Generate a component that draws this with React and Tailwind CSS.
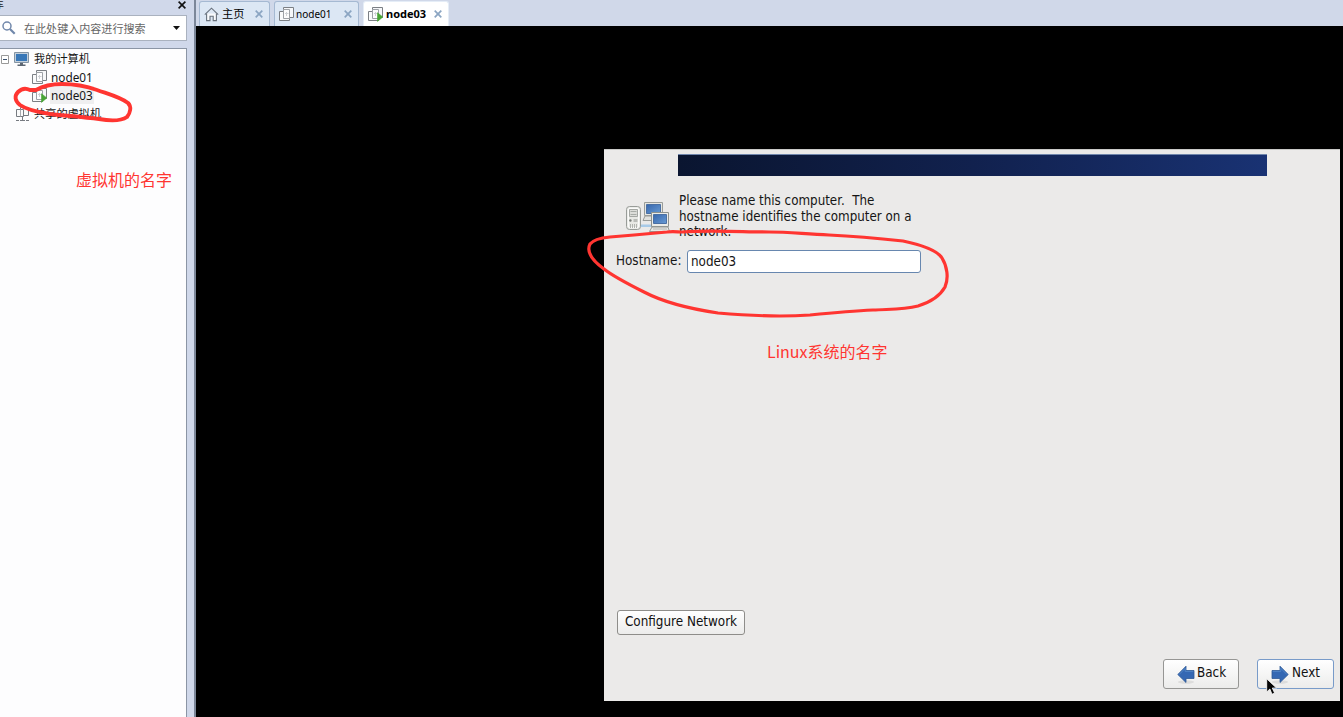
import React from "react";

function HomeIcon() {
  return (
    <svg className="block shrink-0" width="15" height="15" viewBox="0 0 15 15" fill="#f8fafc" stroke="#68717c" strokeWidth="1.1">
      <path d="M2.6 6.6V13.6H6V9.3H9.2V13.6H12.4V6.6" />
      <path d="M.8 7.6L7.5 1.2L14.2 7.6" fill="none" />
    </svg>
  );
}

function VmIcon({ running = false }) {
  return (
    <svg className="block shrink-0" width="16" height="16" viewBox="0 0 16 16" fill="none" stroke="#7b7f84">
      <path d="M4.5 1.5H14.5V11.5H4.5Z" fill="#f6f7f9" />
      <path d="M.5 5.5H10.5V14.5H.5Z" fill="#fafbfc" />
      <path d="M4.5 3.5H10.5V12.5H4.5Z" fill="#fdfdfe" stroke="#9da1a6" />
      <path d="M6 7.5H9.5M7.5 6V10" stroke="#ced1d5" />
      {running && <path d="M9.5 6.7L14.8 11L9.5 15.4Z" fill="#48a536" stroke="#48a536" strokeWidth=".6" />}
    </svg>
  );
}

function SharedIcon() {
  return (
    <svg className="block shrink-0" width="14" height="15" viewBox="0 0 14 15" fill="#fafafa" stroke="#777b81">
      <path d="M4.5 .5H12.5V8.5H4.5Z" />
      <path d="M.5 2.5H7.5V9.5H.5Z" />
      <path d="M4.5 2.5V9.5" stroke="#a6a9ae" />
      <path d="M6.5 9.5V13.5" fill="none" />
      <path d="M0 13.5H3M4 13.5H9M10 13.5H13" />
    </svg>
  );
}

function ComputerIcon() {
  return (
    <svg className="block shrink-0" width="15" height="15" viewBox="0 0 15 15">
      <path d="M.5 .5H14.5V10.5H.5Z" fill="#c4d0dc" stroke="#8494a3" />
      <path d="M2 2H13V9H2Z" fill="#3978b8" />
      <path d="M6 11H9V12.5H11.5V14H3.5V12.5H6Z" fill="#5c6672" />
    </svg>
  );
}

function CloseIcon() {
  return (
    <svg className="block shrink-0" width="8" height="8" viewBox="0 0 8 8" stroke="#8ba5c2" strokeWidth="1.7">
      <path d="M.7 .7L7.3 7.3M7.3 .7L.7 7.3" />
    </svg>
  );
}

function NetworkIcon() {
  return (
    <svg className="block shrink-0" width="44" height="31" viewBox="0 0 44 31">
      <defs>
        <linearGradient id="screen" x2="1" y2="1">
          <stop stopColor="#3767ad" />
          <stop offset="1" stopColor="#679ad3" />
        </linearGradient>
      </defs>
      <path d="M14 22.5H26V25H14Z" fill="#a9cbe8" />
      <path d="M18.5 .5H36.5V13.5H18.5Z" fill="#e5e6e2" stroke="#999c99" />
      <path d="M20.5 2.5H34.5V11.5H20.5Z" fill="url(#screen)" stroke="#4a70a4" />
      <path d="M19 14L17 18.5H27V14Z" fill="#e0e1de" stroke="#999b98" />
      <rect x=".5" y="4.5" width="14" height="23" rx="3" fill="#e8e9e5" stroke="#989c98" />
      <rect x="2.3" y="6.3" width="10.4" height="19.4" rx="1.6" fill="none" stroke="#fff" />
      <path d="M3.5 7.5H11.5V14.5H3.5Z" fill="#dcddd9" stroke="#a5a8a4" />
      <path d="M4.5 9.5H10.5M4.5 12.5H10.5" stroke="#a8aca7" />
      <circle cx="4.4" cy="18.5" r="1.2" fill="#777c78" />
      <path d="M7.5 17H11.5V20H7.5Z" fill="#babcb8" />
      <path d="M4.5 22V26M6.5 22V26M8.5 22V26M10.5 22V26" stroke="#b1b4af" />
      <path d="M25.5 10.5H42.5V24.5H25.5Z" fill="#ebece8" stroke="#8e928e" />
      <path d="M27.5 12.5H40.5V21.5H27.5Z" fill="url(#screen)" stroke="#4a70a4" />
      <path d="M26 25H42L43.5 29.5H23.5Z" fill="#e7e8e4" stroke="#979a96" />
      <path d="M27 27H41" stroke="#b4b6b2" />
    </svg>
  );
}

function ArrowIcon({ back = false }) {
  return (
    <svg className="block shrink-0" width="18" height="20" viewBox="0 0 18 20">
      <ellipse cx="9" cy="18" rx="8" ry="1.8" fill="#000" opacity=".08" />
      <g transform={back ? "translate(18 0) scale(-1 1)" : undefined}>
        <path d="M1 6.5H9V2.2L17.2 10.5L9 18.5V14.5H1Z" fill="#3568b3" stroke="#2f5995" strokeWidth=".8" />
        <path d="M1.7 7.4H9.8V4.3L15.8 10.5" fill="none" stroke="#568acb" strokeWidth=".8" />
      </g>
    </svg>
  );
}

function Tab({ label, width, icon, active = false, labelClass }) {
  return (
    <div className={`${width} ${active ? "border-[#e5edf7] bg-white" : "border-[#a5b9d2] bg-[#dce7f4]"} flex h-[25px] items-center rounded-t-[3px] border border-b-0 pr-[6px] pl-[4px]`}>
      {icon}
      <span className={`${labelClass} flex-1 whitespace-nowrap text-black`}>{label}</span>
      <CloseIcon />
    </div>
  );
}

function Sidebar() {
  return (
    <aside className="flex h-full w-[196px] shrink-0 flex-col border-r-2 border-[#7c8799] bg-[#d0d8ea] font-['Noto_Sans_CJK_SC',sans-serif]">
      <div className="flex h-[15px] items-start justify-between overflow-hidden pr-[8px]">
        <span className="-mt-[5px] -ml-[8px] text-[12px] leading-[16px] text-[#222]">库</span>
        <svg className="mt-[1px]" width="8" height="8" viewBox="0 0 8 8" stroke="#111" strokeWidth="1.6">
          <path d="M.6 .6L7.4 7.4M7.4 .6L.6 7.4" />
        </svg>
      </div>
      <div className="flex h-[26px] w-[187px] items-center border border-l-0 border-[#aab2bf] bg-white pr-[6px] pl-[2px]">
        <svg className="shrink-0" width="14" height="14" viewBox="0 0 14 14" fill="none" stroke="#7188ab">
          <circle cx="5" cy="5" r="4" strokeWidth="1.5" />
          <path d="M8 8L12.7 12.7" strokeWidth="2.2" />
        </svg>
        <span className="ml-[8px] flex-1 text-[11.05px] whitespace-nowrap text-[#666]">在此处键入内容进行搜索</span>
        <svg width="7" height="4" viewBox="0 0 7 4"><path d="M0 0H7L3.5 4Z" fill="#111" /></svg>
      </div>
      <div className="mt-[7px] w-[187px] flex-1 border-t border-r border-[#8b95a5] bg-[#fdfdfe] text-[11.2px] text-[#161616]">
        <div className="flex h-[19px] items-center pt-[1px] pl-[1px]">
          <svg className="mr-[5px]" width="8" height="9" viewBox="0 0 8 9"><path d="M.5 .5H7.5V8.5H.5Z" fill="#fff" stroke="#999" /><path d="M2 4.5H6" stroke="#39506e" /></svg>
          <ComputerIcon />
          <span className="ml-[5px] pb-[3px] leading-[18px]">我的计算机</span>
        </div>
        <div className="flex h-[18px] items-center pl-[32px]">
          <VmIcon />
          <span className="ml-[3px] font-['Noto_Sans',sans-serif] text-[11.8px] leading-[18px]">node01</span>
        </div>
        <div className="flex h-[19px] items-start pl-[32px]">
          <div className="pt-[1px]"><VmIcon running /></div>
          <span className="ml-[2px] bg-[#efeff0] px-[1px] font-['Noto_Sans',sans-serif] text-[11.8px] leading-[18px]">node03</span>
        </div>
        <div className="flex h-[18px] items-center pl-[16px]">
          <SharedIcon />
          <span className="ml-[4px] pb-[2px] leading-[18px]">共享的虚拟机</span>
        </div>
      </div>
    </aside>
  );
}

function DialogButton({ children, className }) {
  return (
    <button className={`${className} flex items-center rounded-[3px] border bg-linear-to-b from-white to-[#ececeb] whitespace-nowrap text-[#111] font-stretch-condensed`}>
      {children}
    </button>
  );
}

function Installer() {
  return (
    <section className="mt-[123px] ml-[408px] flex h-[552px] w-[736px] flex-col border-t border-[#c9c9c7] bg-[#ebeae9] font-['DejaVu_Sans_Condensed','DejaVu_Sans',sans-serif] text-[13.35px] text-[#151515] font-stretch-condensed">
      <div className="mt-[4px] ml-[74px] h-[22px] w-[589px] border-t border-[#6f85ab] bg-linear-to-r from-[#0a1530] via-[#11214e] to-[#193273]" />
      <div className="mt-[17px] ml-[22px] flex">
        <div className="mt-[9px]"><NetworkIcon /></div>
        <p className="ml-[9px] text-[13.25px] leading-[15.5px] whitespace-pre">{"Please name this computer.  The\nhostname identifies the computer on a\nnetwork."}</p>
      </div>
      <label className="mt-[10px] ml-[12px] flex h-[23px] items-center">
        <span className="w-[71px] pt-[1px]">Hostname:</span>
        <input readOnly value="node03" className="h-[23px] w-[234px] rounded-[3px] border border-[#6787af] bg-white px-[3px] pt-[1px] outline-none" />
      </label>
      <div className="flex-1" />
      <DialogButton className="ml-[13px] h-[25px] w-[128px] justify-center border-[#8e8d8a]">Configure Network</DialogButton>
      <div className="mt-[24px] mr-[6px] mb-[12px] flex h-[30px] justify-end gap-[18px]">
        <DialogButton className="w-[76px] gap-[2px] border-[#969694] pl-[13px]"><ArrowIcon back /><span className="pb-[1px]">Back</span></DialogButton>
        <DialogButton className="w-[77px] gap-[3px] border-[#789bc9] pl-[13px]"><ArrowIcon /><span className="pb-[1px]">Next</span></DialogButton>
      </div>
    </section>
  );
}

function Annotations() {
  return (
    <div className="pointer-events-none absolute inset-0 font-['Noto_Sans_CJK_SC',sans-serif] text-[16px] leading-[24px] text-[#ff3531]">
      <svg className="absolute inset-0" width="1343" height="717" viewBox="0 0 1343 717" fill="none" stroke="#ff3531" strokeLinecap="round" strokeLinejoin="round">
        <path strokeWidth="3.9" d="M30 90C26 88 22 88 18 92C14 96 15 101 20 105C27 110 37 112 50 114C69 116 83 117 99 119C110 121 121 121 127 117C130 113 132 107 128 103C120 97 108 94 97 90C86 86 75 84 62 84C51 84 43 86 36 90H30" />
        <path strokeWidth="3.2" d="M682 232C713 230 743 232 769 232C789 232 804 234 829 235C852 236 876 238 903 241C922 245 937 250 942 258C947 266 949 278 945 287C940 296 931 302 918 306C903 310 890 309 873 310C850 311 830 313 810 315C781 317 752 316 718 313C691 309 665 303 644 292C630 285 614 277 604 269C593 261 586 252 590 244C593 240 600 238 610 237L634 235L667 232C673 231 678 232 682 232" />
      </svg>
      <span className="absolute top-[167px] left-[76px] whitespace-nowrap">虚拟机的名字</span>
      <span className="absolute top-[339px] left-[767px] whitespace-nowrap">Linux系统的名字</span>
      <svg className="absolute top-[678px] left-[1266px]" width="12" height="18" viewBox="0 0 12 18">
        <path d="M.7 .8V14L3.9 11L6 16.3L8.6 15.1L6.3 10H10.5Z" fill="#050505" stroke="#fff" strokeWidth=".8" />
      </svg>
    </div>
  );
}

export default function App() {
  return (
    <div className="relative flex h-[717px] w-[1343px] overflow-hidden bg-black">
      <Sidebar />
      <main className="flex min-w-0 flex-1 flex-col">
        <header className="flex h-[26px] shrink-0 items-end gap-[4px] bg-[#d0d8e9] pl-[3px]">
          <Tab width="w-[71px]" label="主页" icon={<HomeIcon />} labelClass="ml-[3px] pb-[1px] font-['Noto_Sans_CJK_SC',sans-serif] text-[11.2px]" />
          <Tab width="w-[85px]" label="node01" icon={<VmIcon />} labelClass="ml-[1px] font-['Noto_Sans',sans-serif] text-[10px]" />
          <Tab width="w-[86px]" label="node03" icon={<VmIcon running />} labelClass="ml-[2px] font-['Noto_Sans',sans-serif] text-[11px] font-bold" active />
        </header>
        <Installer />
      </main>
      <Annotations />
    </div>
  );
}
